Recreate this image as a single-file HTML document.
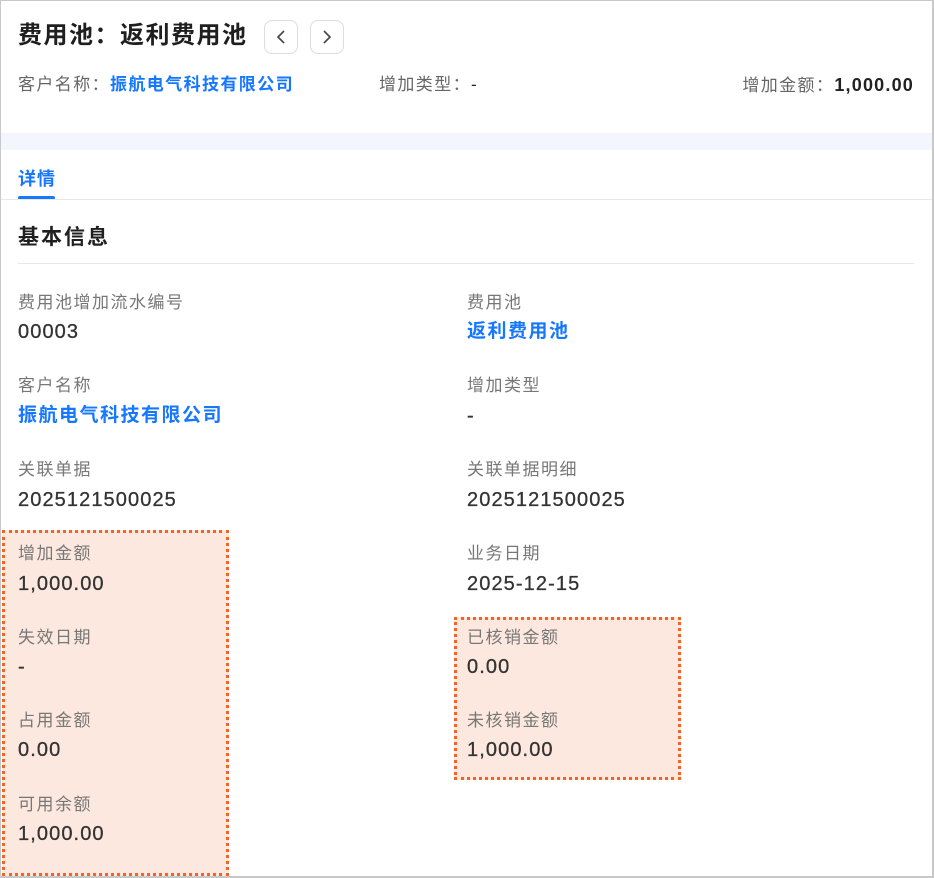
<!DOCTYPE html>
<html><head><meta charset="utf-8"><style>
*{margin:0;padding:0;box-sizing:border-box}
body{width:934px;height:878px;position:relative;background:#fff;font-family:"Liberation Sans","Noto Sans CJK SC",sans-serif;overflow:hidden}
.frame{position:absolute;left:0;top:0;width:934px;height:878px;border:1px solid #c8c8c8;border-right:2px solid #c8c8c8;border-bottom:2px solid #c8c8c8;z-index:5;pointer-events:none}
.a{position:absolute;white-space:nowrap;line-height:1}
.t{font-size:24px;font-weight:bold;color:#1f1f1f;letter-spacing:1.5px}
.btn{position:absolute;top:20px;width:34px;height:34px;border:1px solid #dcdcdc;border-radius:8px;background:#fff}
.h{font-size:17px;color:#666;letter-spacing:1.4px}
.hv{font-size:18px;color:#222;font-weight:bold;letter-spacing:1.2px}
.lb{font-size:17px;color:#777;letter-spacing:1.5px}
.v{font-size:20px;color:#333;letter-spacing:1.1px;-webkit-text-stroke:0.3px #333}
.blue{color:#1677ff;font-weight:bold;-webkit-text-stroke:0}
.box{position:absolute;background:#fce8df;border:3px dotted #f06426}
</style></head><body>
<div class="frame"></div>
<div class="a t" style="left:18px;top:24px">费用池：返利费用池</div>
<div class="btn" style="left:264px"><svg width="32" height="32" viewBox="0 0 32 32"><path d="M19 10 L13 16 L19 22" fill="none" stroke="#444" stroke-width="1.6"/></svg></div>
<div class="btn" style="left:310px"><svg width="32" height="32" viewBox="0 0 32 32"><path d="M13 10 L19 16 L13 22" fill="none" stroke="#444" stroke-width="1.6"/></svg></div>
<div class="a h" style="left:18px;top:76px">客户名称：<span class="blue">振航电气科技有限公司</span></div>
<div class="a h" style="left:379px;top:76px">增加类型：<span style="color:#222">-</span></div>
<div class="a h" style="right:20px;top:76px">增加金额：<span class="hv">1,000.00</span></div>
<div style="position:absolute;left:0;top:133px;width:934px;height:17px;background:#f3f6fc"></div>
<div class="a" style="left:18px;top:170px;font-size:18px;color:#1677ff;font-weight:bold;letter-spacing:1px">详情</div>
<div style="position:absolute;left:18px;top:196px;width:37px;height:4px;border-radius:2px;background:#1677ff"></div>
<div style="position:absolute;left:0;top:199px;width:934px;height:1px;background:#e8e8e8"></div>
<div class="a" style="left:18px;top:227px;font-size:21px;font-weight:bold;color:#1f1f1f;letter-spacing:2px">基本信息</div>
<div style="position:absolute;left:18px;top:263px;width:896px;height:1px;background:#e8e8e8"></div>
<div class="box" style="left:2px;top:530px;width:227px;height:346px"></div>
<div class="box" style="left:454px;top:617px;width:227px;height:163px"></div>

<div class="a lb" style="left:18px;top:294px">费用池增加流水编号</div>
<div class="a v" style="left:18px;top:322px">00003</div>
<div class="a lb" style="left:467px;top:294px">费用池</div>
<div class="a v blue" style="left:467px;top:322px;font-size:19px;letter-spacing:1.5px">返利费用池</div>

<div class="a lb" style="left:18px;top:377px">客户名称</div>
<div class="a v blue" style="left:18px;top:406px;font-size:19px;letter-spacing:1.5px">振航电气科技有限公司</div>
<div class="a lb" style="left:467px;top:377px">增加类型</div>
<div class="a v" style="left:467px;top:406px">-</div>

<div class="a lb" style="left:18px;top:461px">关联单据</div>
<div class="a v" style="left:18px;top:490px">2025121500025</div>
<div class="a lb" style="left:467px;top:461px">关联单据明细</div>
<div class="a v" style="left:467px;top:490px">2025121500025</div>

<div class="a lb" style="left:18px;top:545px">增加金额</div>
<div class="a v" style="left:18px;top:574px">1,000.00</div>
<div class="a lb" style="left:467px;top:545px">业务日期</div>
<div class="a v" style="left:467px;top:574px">2025-12-15</div>

<div class="a lb" style="left:18px;top:629px">失效日期</div>
<div class="a v" style="left:18px;top:657px">-</div>
<div class="a lb" style="left:467px;top:629px">已核销金额</div>
<div class="a v" style="left:467px;top:657px">0.00</div>

<div class="a lb" style="left:18px;top:712px">占用金额</div>
<div class="a v" style="left:18px;top:740px">0.00</div>
<div class="a lb" style="left:467px;top:712px">未核销金额</div>
<div class="a v" style="left:467px;top:740px">1,000.00</div>

<div class="a lb" style="left:18px;top:796px">可用余额</div>
<div class="a v" style="left:18px;top:824px">1,000.00</div>
</body></html>
